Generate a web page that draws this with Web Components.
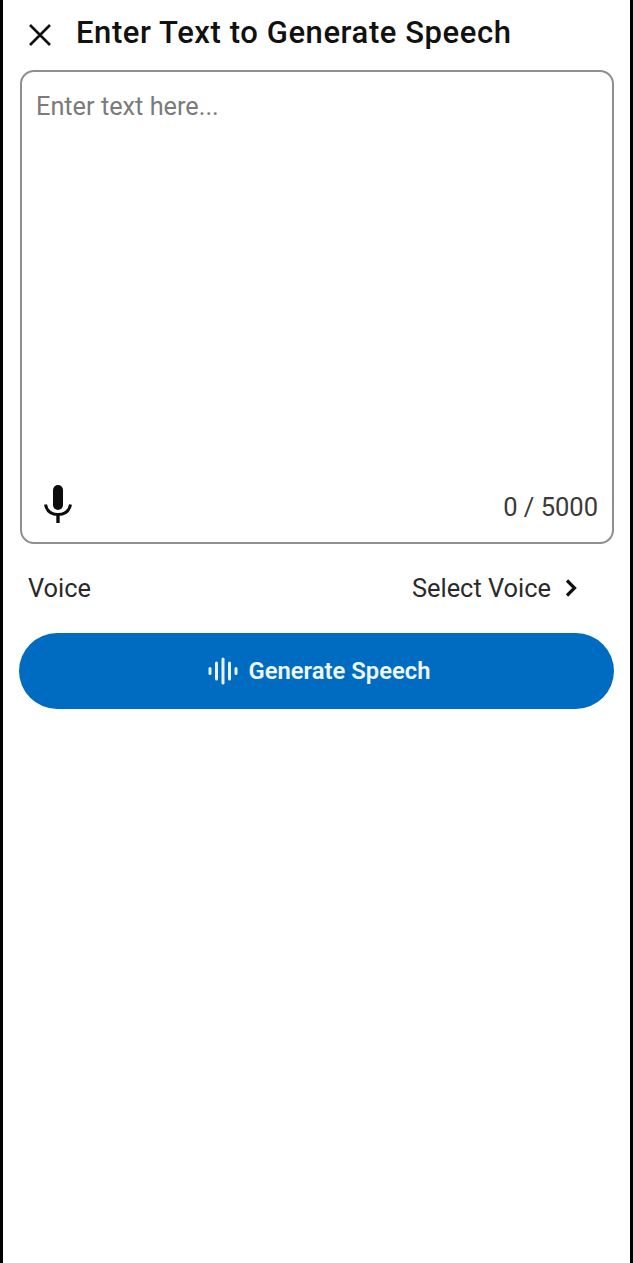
<!DOCTYPE html>
<html lang="en">
<head>
<meta charset="utf-8">
<title>Enter Text to Generate Speech</title>
<style>
  html, body { margin: 0; height: 100%; background: #fff; }
  body { font-family: Roboto, "Liberation Sans", sans-serif; }
</style>
</head>
<body>
<speech-screen>
  <speech-header>Enter Text to Generate Speech</speech-header>
  <speech-input placeholder="Enter text here..." count="0 / 5000"></speech-input>
  <voice-row label="Voice" value="Select Voice"></voice-row>
  <generate-button>Generate Speech</generate-button>
</speech-screen>

<script>
// ── Page frame: black phone edges with the column inside ─────────────────────
class SpeechScreen extends HTMLElement {
  constructor() {
    super();
    this.attachShadow({ mode: 'open' }).innerHTML = `
      <style>
        :host {
          display: block;
          box-sizing: border-box;
          height: 1263px;
          background: #fff;
          border-left: 3px solid #000;
          border-right: 3px solid #000;
          padding: 0 16px;
        }
      </style>
      <slot></slot>`;
  }
}

class SpeechHeader extends HTMLElement {
  constructor() {
    super();
    this.attachShadow({ mode: 'open' }).innerHTML = `
      <style>
        :host {
          display: flex;
          align-items: center;
          height: 70px;
          padding-left: 9px;
          padding-bottom: 6px;
          box-sizing: border-box;
          gap: 24px;
          color: #111;
          font-size: 31px;
          letter-spacing: 0.58px;
          font-weight: 500;
        }
        svg { width: 24px; height: 24px; flex: none; margin-top: 5px; }
      </style>
      <svg viewBox="0 0 24 24" fill="none" stroke="#111" stroke-width="2.6">
        <path d="M2 2 L22 22 M22 2 L2 22"/>
      </svg>
      <slot></slot>`;
  }
}

class SpeechInput extends HTMLElement {
  constructor() {
    super();
    this.attachShadow({ mode: 'open' }).innerHTML = `
      <style>
        :host {
          display: flex;
          flex-direction: column;
          justify-content: space-between;
          box-sizing: border-box;
          height: 474px;
          margin-left: 1px;
          border: 2px solid #8f8f8f;
          border-radius: 14px;
          padding: 19px 14px 14px 14px;
        }
        .placeholder { font-size: 25.3px; line-height: 32px; color: #7b7b7b; }
        .foot { display: flex; align-items: center; justify-content: space-between; }
        .count { font-size: 25.5px; color: #3a3a3a; padding-top: 2px; }
        svg { width: 30px; height: 40px; margin: 0 0 4px 7px; display: block; }
      </style>
      <div class="placeholder"></div>
      <div class="foot">
        <svg viewBox="0 0 30 40" fill="none">
          <rect x="10" y="1" width="10" height="25" rx="5" fill="#0c0c0c"/>
          <path d="M2.5 20.5 C4 28 9.5 30.5 15 30.5 C20.5 30.5 26 28 27.5 20.5" stroke="#0c0c0c" stroke-width="3"/>
          <path d="M15 30 V39" stroke="#0c0c0c" stroke-width="3.4"/>
        </svg>
        <span class="count"></span>
      </div>`;
  }

  connectedCallback() {
    this.shadowRoot.querySelector('.placeholder').textContent = this.getAttribute('placeholder');
    this.shadowRoot.querySelector('.count').textContent = this.getAttribute('count');
  }
}

class VoiceRow extends HTMLElement {
  constructor() {
    super();
    this.attachShadow({ mode: 'open' }).innerHTML = `
      <style>
        :host {
          display: flex;
          align-items: center;
          justify-content: space-between;
          box-sizing: border-box;
          height: 89px;
          padding: 0 37px 2px 9px;
          font-size: 25.4px;
          color: #2a2a2a;
        }
        .right { display: flex; align-items: center; gap: 14px; }
        svg { width: 12px; height: 18px; }
      </style>
      <span class="label"></span>
      <span class="right">
        <span class="value"></span>
        <svg viewBox="0 0 12 18" fill="none" stroke="#111" stroke-width="3.2">
          <path d="M2 1.5 L9.5 9 L2 16.5"/>
        </svg>
      </span>`;
  }

  connectedCallback() {
    this.shadowRoot.querySelector('.label').textContent = this.getAttribute('label');
    this.shadowRoot.querySelector('.value').textContent = this.getAttribute('value');
  }
}

class GenerateButton extends HTMLElement {
  constructor() {
    super();
    this.attachShadow({ mode: 'open' }).innerHTML = `
      <style>
        :host {
          display: flex;
          align-items: center;
          justify-content: center;
          gap: 11px;
          box-sizing: border-box;
          height: 76px;
          padding-left: 5px;
          border-radius: 38px;
          background: #006cc1;
          color: #eef7fd;
          font-size: 23.8px;
          font-weight: 600;
        }
        svg { width: 30px; height: 28px; flex: none; }
      </style>
      <svg viewBox="0 0 30 28" fill="none" stroke="#e6f3fc" stroke-linecap="round" stroke-width="3">
        <path d="M2 11.5 V16.5 M8.5 6 V22 M15 2 V26 M21.5 6 V22 M28 11.5 V16.5"/>
      </svg>
      <slot></slot>`;
  }
}

customElements.define('speech-screen', SpeechScreen);
customElements.define('speech-header', SpeechHeader);
customElements.define('speech-input', SpeechInput);
customElements.define('voice-row', VoiceRow);
customElements.define('generate-button', GenerateButton);
</script>
</body>
</html>
